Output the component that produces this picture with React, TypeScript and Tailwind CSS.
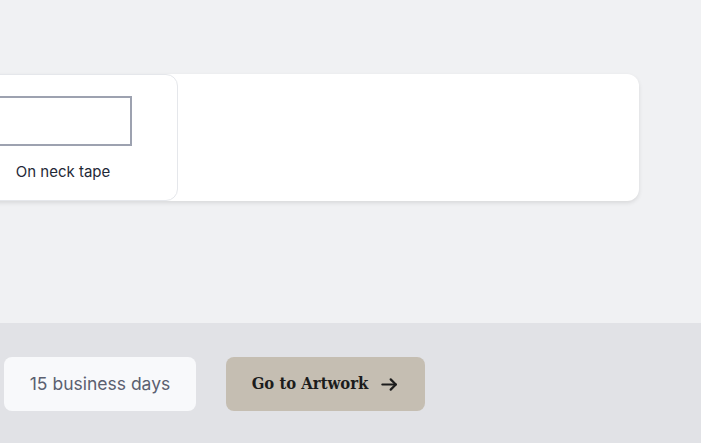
import React from "react";

export default function App() {
  return (
    <div className="w-[701px] h-[443px] flex flex-col bg-[#f0f1f3] overflow-hidden" style={{ fontFamily: "Inter, 'Noto Sans', sans-serif" }}>
      <div className="h-[323px] pt-[74px] overflow-hidden">
        <div className="ml-[-300px] w-[939px] h-[127px] bg-white rounded-xl shadow-[0_2px_4px_rgba(0,0,0,0.10)] flex">
          <div className="ml-[248px] w-[230px] h-[127px] border border-[#e5e7eb] rounded-xl flex flex-col items-center pt-[21px]">
            <div className="w-[138px] h-[50px] border-2 border-[#9da2b0]" />
            <div className="mt-[16px] text-[15px] leading-[20px] text-[#1f2937]">On neck tape</div>
          </div>
        </div>
      </div>
      <div className="flex-1 bg-[#e1e2e6] flex items-start pt-[34px] pl-[4px] gap-[30px]">
        <div className="w-[192px] h-[54px] rounded-lg bg-[#f8f9fb] flex items-center justify-center text-[17.5px] text-[#5b6070]">
          15 business days
        </div>
        <button className="w-[199px] h-[54px] rounded-lg bg-[#c5beb2] flex items-center justify-center gap-[12px] text-[#1c1c1c]">
          <span className="text-[16.5px] font-bold" style={{ fontFamily: "'DejaVu Serif Condensed', 'DejaVu Serif', serif" }}>Go to Artwork</span>
          <svg width="19" height="19" viewBox="0 0 24 24" fill="none" stroke="currentColor" strokeWidth="2.8" strokeLinecap="round" strokeLinejoin="round">
            <path d="M3 12h17" />
            <path d="M13.5 5.5l6.5 6.5-6.5 6.5" />
          </svg>
        </button>
      </div>
    </div>
  );
}
